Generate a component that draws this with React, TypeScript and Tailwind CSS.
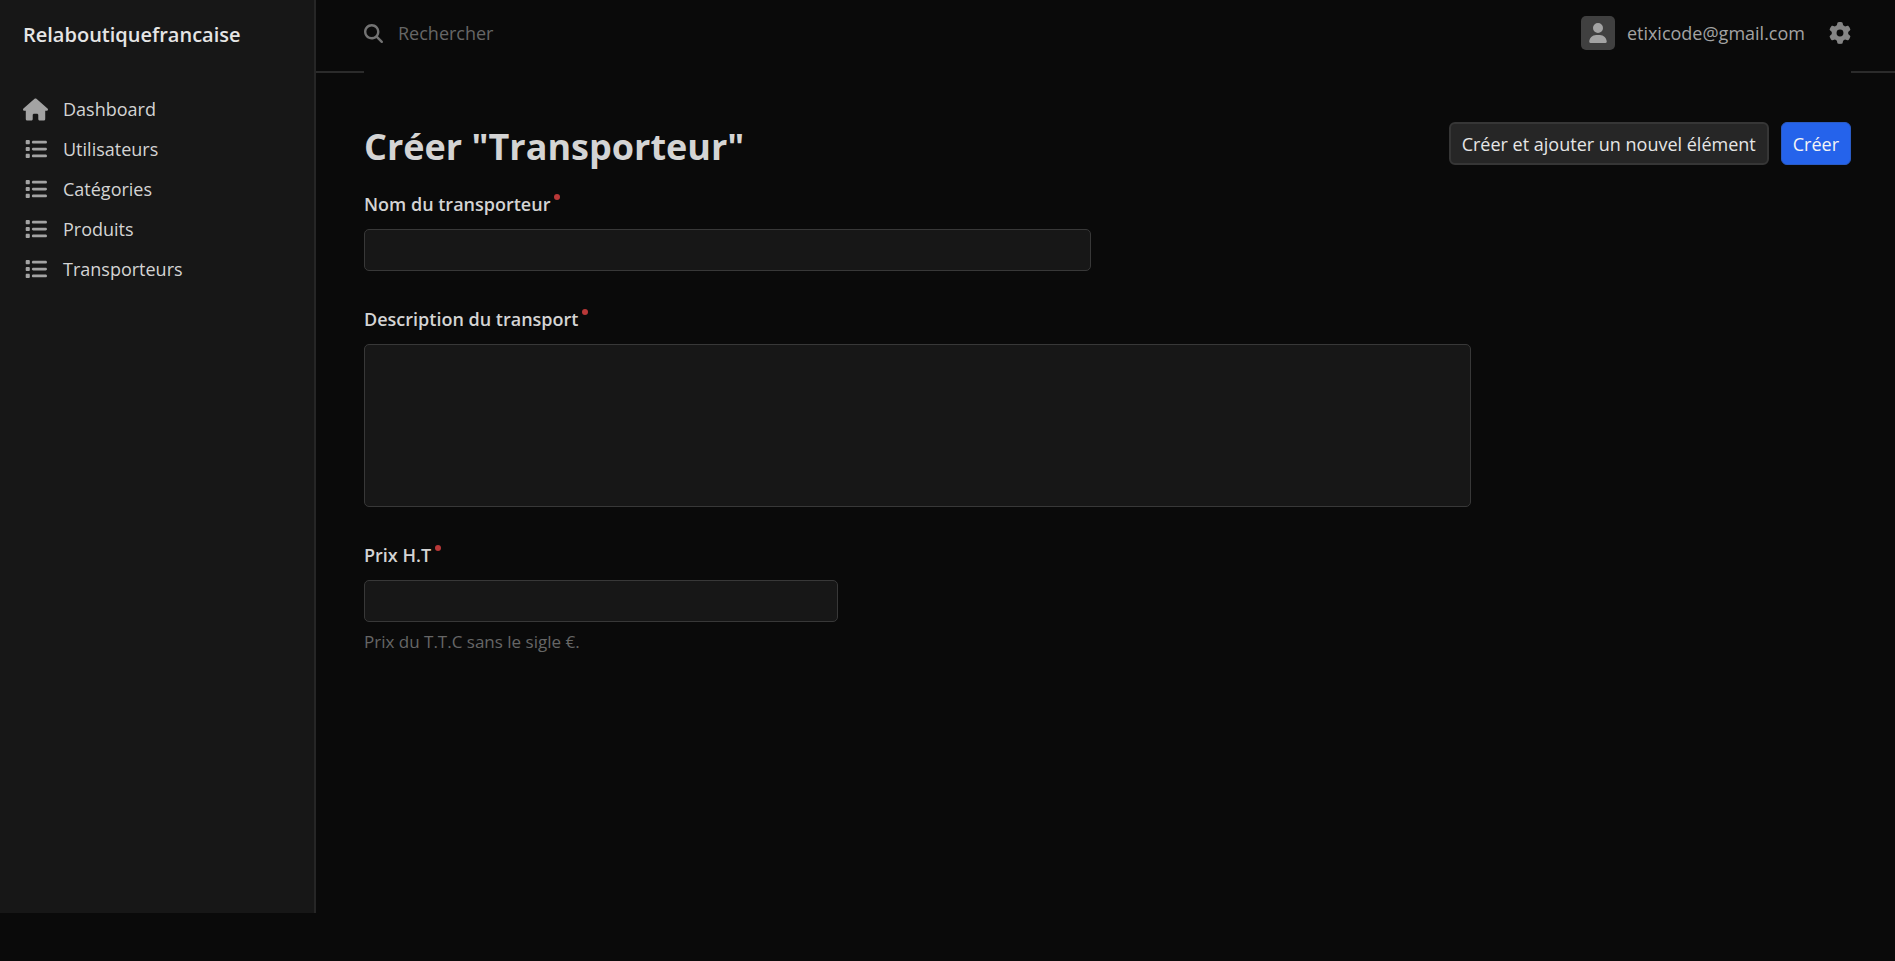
import React from "react";
import { FaHouse, FaList, FaMagnifyingGlass, FaUser, FaGear } from "react-icons/fa6";

const sections = ["Utilisateurs", "Catégories", "Produits", "Transporteurs"];

const control =
  "block w-full rounded-[5px] border border-[#383838] bg-[#171717] px-3 text-lg text-[#d4d4d4] outline-none focus:border-[#2563eb]";

function NavItem({ label, icon }: { label: string; icon: React.ReactNode }) {
  return (
    <li>
      <a href="#" className="flex h-10 items-center gap-[15px] text-[#d4d4d4] hover:text-white">
        <span className="flex w-[25px] justify-center text-[#a3a3a3]">{icon}</span>
        {label}
      </a>
    </li>
  );
}

function Field({
  id,
  label,
  help,
  children,
}: {
  id: string;
  label: string;
  help?: string;
  children: React.ReactNode;
}) {
  return (
    <div>
      <label htmlFor={id} className="mb-3 flex h-[26px] gap-1 font-semibold leading-[26px] text-[#d4d4d4]">
        {label}
        <span aria-hidden="true" className="mt-[3px] size-[6px] rounded-full bg-[#b93838]" />
      </label>
      {children}
      {help && <p className="mt-2 text-[17px] leading-6 text-[#666666]">{help}</p>}
    </div>
  );
}

export default function App() {
  return (
    <div className="flex min-h-screen bg-[#0a0a0a] font-['Open_Sans','Noto_Sans',sans-serif] text-lg text-[#d4d4d4]">
      <aside className="mb-12 w-[316px] shrink-0 border-r-2 border-[#262626] bg-[#171717] px-[23px]">
        <a href="#" className="flex h-[69px] items-center text-xl font-semibold text-[#e5e5e5]">
          Relaboutiquefrancaise
        </a>
        <nav className="mt-5">
          <ul>
            <NavItem label="Dashboard" icon={<FaHouse size={25} />} />
            {sections.map((name) => (
              <NavItem key={name} label={name} icon={<FaList size={22} />} />
            ))}
          </ul>
        </nav>
      </aside>

      <div className="flex min-w-0 flex-1 flex-col">
        <header>
          <div className="flex h-[71px] items-center pb-[5px] pl-12 pr-[44px]">
            <label htmlFor="search" className="text-[#737373]">
              <FaMagnifyingGlass size={19} aria-label="Rechercher" />
            </label>
            <input
              id="search"
              type="search"
              placeholder="Rechercher"
              className="ml-[15px] min-w-0 flex-1 bg-transparent text-[#d4d4d4] outline-none placeholder:text-[#666666]"
            />
            <button type="button" className="flex items-center gap-3 text-[#a3a3a3]">
              <span className="flex size-[34px] items-center justify-center rounded-[5px] bg-[#404040]">
                <FaUser size={20} />
              </span>
              etixicode@gmail.com
            </button>
            <button type="button" aria-label="Paramètres" className="ml-6 text-[#858585]">
              <FaGear size={22} />
            </button>
          </div>
          <div className="flex h-0.5 justify-between">
            <div className="w-12 bg-[#2b2b2b]" />
            <div className="w-[44px] bg-[#2b2b2b]" />
          </div>
        </header>

        <main className="pl-12 pr-[44px] pt-12">
          <form onSubmit={(event) => event.preventDefault()}>
            <div className="flex flex-wrap items-start justify-between gap-x-6">
              <h1 className="text-4xl font-bold leading-[52px]">Créer "Transporteur"</h1>
              <div className="flex gap-3 pt-px">
                <button
                  type="submit"
                  className="h-[43px] rounded-md border-2 border-[#363636] bg-[#262626] px-[11px] text-[#e5e5e5]"
                >
                  Créer et ajouter un nouvel élément
                </button>
                <button
                  type="submit"
                  className="h-[43px] rounded-md border border-[#2a5bc4] bg-[#2563eb] px-[11px] text-[#f5f5f5]"
                >
                  Créer
                </button>
              </div>
            </div>

            <div className="mt-[18px] flex flex-col gap-[35px]">
              <Field id="name" label="Nom du transporteur">
                <input id="name" type="text" required className={control + " h-[42px] max-w-[727px]"} />
              </Field>
              <Field id="description" label="Description du transport">
                <textarea
                  id="description"
                  required
                  className={control + " h-[163px] max-w-[1107px] resize-none py-2"}
                />
              </Field>
              <Field id="price" label="Prix H.T" help="Prix du T.T.C sans le sigle €.">
                <input id="price" type="text" required className={control + " h-[42px] max-w-[474px]"} />
              </Field>
            </div>
          </form>
        </main>
      </div>
    </div>
  );
}
